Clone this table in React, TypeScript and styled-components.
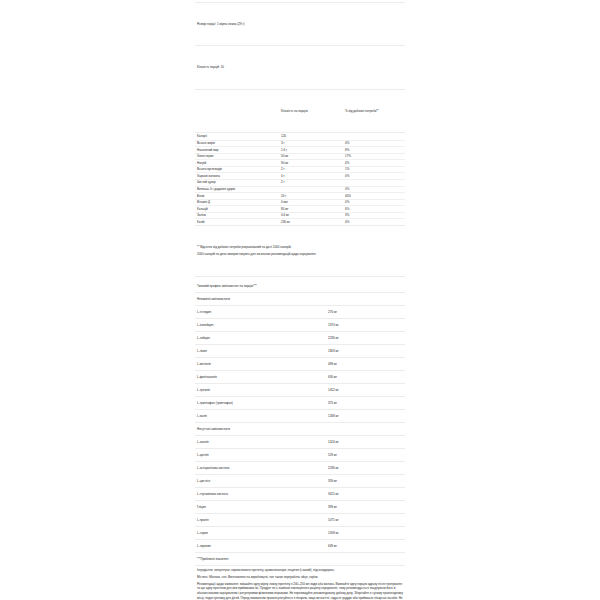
import React from "react";
import styled, { createGlobalStyle } from "styled-components";

const Global = createGlobalStyle`
  html, body { margin: 0; padding: 0; background: #ffffff; }
  body { font-family: "Liberation Sans", Arial, sans-serif; color: #2a2a2a; }
`;

const Page = styled.div`
  width: 210px;
  margin: 0 auto;
  padding-top: 2px;
  font-size: 3px;
  line-height: 4.5px;
`;

const Section = styled.div<{ $h: number }>`
  height: ${(p) => p.$h}px;
  box-sizing: border-box;
  border-top: 1px solid #ececec;
  display: flex;
  align-items: center;
  padding-left: 2px;
`;

const HeaderRow = styled.div`
  height: 43px;
  box-sizing: border-box;
  border-top: 1px solid #ececec;
  display: grid;
  grid-template-columns: 84px 64px 1fr;
  align-items: center;
  padding-left: 2px;
`;

const NutTable = styled.div`
  border-top: 1px solid #ececec;
  border-bottom: 1px solid #ececec;
`;

const NutRow = styled.div`
  height: 6.57px;
  box-sizing: border-box;
  display: grid;
  grid-template-columns: 84px 64px 1fr;
  align-items: center;
  padding-left: 2px;
  & + & { border-top: 1px solid #f0f0f0; }
`;

const Notes = styled.div`
  padding: 18px 0 18.5px 2px;
  line-height: 7px;
`;

const Amino = styled.div`
  border-top: 1px solid #ececec;
  padding-top: 2.5px;
`;

const AminoRow = styled.div`
  height: 13px;
  box-sizing: border-box;
  border-bottom: 1px solid #ececec;
  display: grid;
  grid-template-columns: 131px 1fr;
  align-items: center;
  padding-left: 2px;
`;

const Info = styled.div`
  padding: 2.5px 0 0 2px;
`;

const InfoLine = styled.p`
  margin: 0 0 2.2px;
  line-height: 4.5px;
`;

const Para = styled.p`
  margin: 1.5px 0 0;
  line-height: 4.6px;
`;

const nutrition: [string, string, string][] = [
  ["Калорії", "120", ""],
  ["Всього жирів", "3 г", "4%"],
  ["Насичений жир", "1.6 г", "8%"],
  ["Холестерин", "50 мг", "17%"],
  ["Натрій", "90 мг", "4%"],
  ["Всього вуглеводів", "2 г", "1%"],
  ["Харчові волокна", "0 г", "0%"],
  ["Чистий цукор", "2 г", ""],
  ["Включає 0 г доданих цукрів", "", "0%"],
  ["Білок", "20 г", "40%"],
  ["Вітамін Д", "0 мкг", "0%"],
  ["Кальцій", "80 мг", "6%"],
  ["Залізо", "0.6 мг", "3%"],
  ["Калій", "230 мг", "4%"],
];

const essential: [string, string][] = [
  ["L-гістидин", "270 мг"],
  ["L-ізолейцин", "1370 мг"],
  ["L-лейцин", "2236 мг"],
  ["L-лізин", "1803 мг"],
  ["L-метіонін", "499 мг"],
  ["L-фенілаланін", "630 мг"],
  ["L-треонін", "1452 мг"],
  ["L-триптофан (триптофан)", "375 мг"],
  ["L-валін", "1268 мг"],
];

const nonEssential: [string, string][] = [
  ["L-аланін", "1024 мг"],
  ["L-аргінін", "529 мг"],
  ["L-аспарагінова кислота", "2236 мг"],
  ["L-цистеїн", "359 мг"],
  ["L-глутамінова кислота", "3415 мг"],
  ["Гліцин", "399 мг"],
  ["L-пролін", "1071 мг"],
  ["L-серин", "1058 мг"],
  ["L-тирозин", "649 мг"],
];

export default function App() {
  return (
    <>
      <Global />
      <Page>
        <Section $h={43}>Розмір порції: 1 мірна ложка (29 г)</Section>
        <Section $h={44}>Кількість порцій: 10</Section>
        <HeaderRow>
          <span />
          <span>Кількість на порцію</span>
          <span>% від добової потреби**</span>
        </HeaderRow>
        <NutTable>
          {nutrition.map(([a, b, c]) => (
            <NutRow key={a}>
              <span>{a}</span>
              <span>{b}</span>
              <span>{c}</span>
            </NutRow>
          ))}
        </NutTable>
        <Notes>
          <div>** Відсоток від добової потреби розрахований на дієті 2000 калорій.</div>
          <div>2000 калорій на день використовують для загальних рекомендацій щодо харчування.</div>
        </Notes>
        <Amino>
          <AminoRow>
            <span>Типовий профіль амінокислот на порцію***</span>
          </AminoRow>
          <AminoRow>
            <span>Незамінні амінокислоти</span>
          </AminoRow>
          {essential.map(([a, b]) => (
            <AminoRow key={a}>
              <span>{a}</span>
              <span>{b}</span>
            </AminoRow>
          ))}
          <AminoRow>
            <span>Несуттєві амінокислоти</span>
          </AminoRow>
          {nonEssential.map(([a, b]) => (
            <AminoRow key={a}>
              <span>{a}</span>
              <span>{b}</span>
            </AminoRow>
          ))}
          <AminoRow>
            <span>***Приблизні значення</span>
          </AminoRow>
        </Amino>
        <Info>
          <InfoLine>Інгредієнти: концентрат сироваткового протеїну, ароматизатори, лецитин (соєвий), підсолоджувач.</InfoLine>
          <InfoLine>Містить: Молоко, соя. Виготовлено на виробництві, яке також переробляє яйця, горіхи.</InfoLine>
          <Para>
            Рекомендації щодо вживання: змішайте одну мірну ложку протеїну з 200–250 мл води або молока. Вживайте одну порцію одразу після тренування та ще одну протягом дня між прийомами їжі. Продукт не є заміною повноцінного раціону харчування, тому рекомендується поєднувати його зі збалансованим харчуванням і регулярними фізичними вправами. Не перевищуйте рекомендовану добову дозу. Зберігайте в сухому прохолодному місці, недоступному для дітей. Перед вживанням проконсультуйтеся з лікарем, якщо ви вагітні, годуєте груддю або приймаєте лікарські засоби. Не використовувати як єдине джерело харчування.
          </Para>
        </Info>
      </Page>
    </>
  );
}
